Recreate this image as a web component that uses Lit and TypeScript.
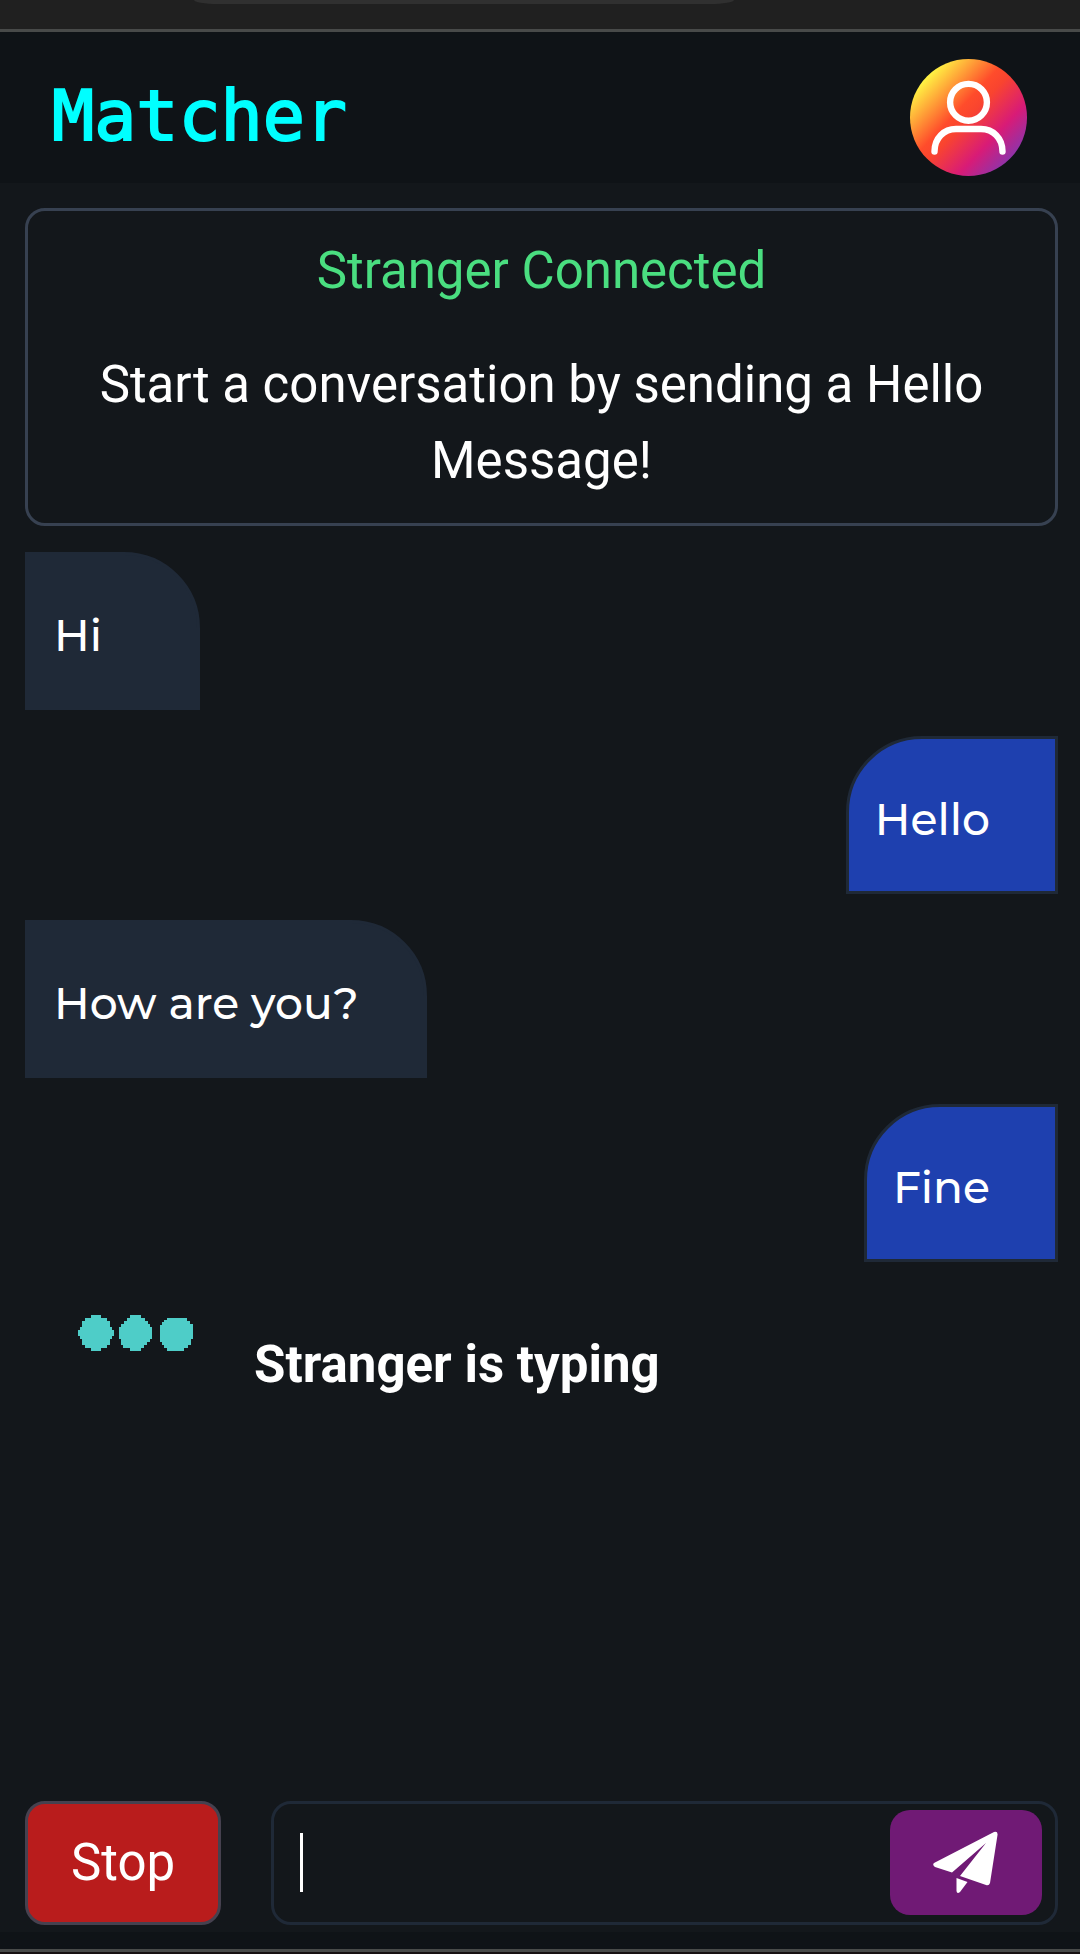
import { LitElement, html, css, svg } from "lit";
import { customElement, property, state } from "lit/decorators.js";

interface ChatMessage {
  from: "stranger" | "me";
  text: string;
}

@customElement("chat-bubble")
class ChatBubble extends LitElement {
  @property() from: ChatMessage["from"] = "stranger";
  @property() text = "";

  static styles = css`
    :host {
      display: flex;
    }
    .bubble {
      box-sizing: border-box;
      min-width: 175px;
      margin: 0;
      padding: 48px 65px 40px 26px;
      border: 3px solid #1f2937;
      background: #1f2937;
      color: #fff;
      font: 500 44px/64px Montserrat, Inter, sans-serif;
      border-radius: 0 76px 0 0;
    }
    .me {
      min-width: 0;
      margin-left: auto;
      background: #1e40af;
      border-radius: 76px 0 0 0;
    }
  `;

  render() {
    return html`<p class="bubble ${this.from}">${this.text}</p>`;
  }
}

@customElement("app-root")
class AppRoot extends LitElement {
  @state() private messages: ChatMessage[] = [
    { from: "stranger", text: "Hi" },
    { from: "me", text: "Hello" },
    { from: "stranger", text: "How are you?" },
    { from: "me", text: "Fine" },
  ];

  static styles = css`
    :host {
      display: flex;
      flex-direction: column;
      min-height: 100vh;
      background: #13171b;
      color: #fff;
      font: 400 51px/76px Roboto, sans-serif;
    }
    .browser {
      height: 29px;
      background: #202020;
      border-bottom: 3px solid #484a49;
    }
    .address {
      height: 4px;
      margin: 0 32% 0 18%;
      background: #303030;
      border-radius: 0 0 24px 24px / 0 0 4px 4px;
    }
    .header {
      display: flex;
      align-items: center;
      justify-content: space-between;
      padding: 27px 53px 7px 52px;
      background: #0f1317;
    }
    .brand {
      margin: 0 0 4px;
      color: #0ff;
      font: 400 70px/96px "Droid Sans Mono", "DejaVu Sans Mono", monospace;
      -webkit-text-stroke: 2px #0ff;
    }
    .avatar {
      display: flex;
      padding: 0;
      border: 0;
      border-radius: 50%;
      background: none;
    }
    .avatar svg {
      width: 117px;
      height: 117px;
    }
    .chat {
      flex: 1;
      display: flex;
      flex-direction: column;
      gap: 26px;
      padding: 25px 22px 25px 25px;
    }
    .notice {
      display: flex;
      flex-direction: column;
      gap: 38px;
      padding: 22px 60px 24px;
      border: 3px solid #374151;
      border-radius: 20px;
      text-align: center;
    }
    .notice p {
      margin: 0;
    }
    .notice .status {
      color: #4ade80;
    }
    .typing {
      display: flex;
      align-items: flex-start;
      gap: 60px;
      padding: 27px 53px;
      font-weight: 700;
    }
    .typing svg {
      width: 116px;
      height: 36px;
    }
    .typing p {
      margin: 12px 0 0;
    }
    .composer {
      display: flex;
      gap: 50px;
      padding: 0 22px 7px 25px;
    }
    .stop {
      padding: 0 43px;
      border: 3px solid #46414f;
      border-radius: 20px;
      background: #b91c1c;
      color: #fff;
      font: inherit;
    }
    .field {
      flex: 1;
      display: flex;
      align-items: center;
      min-width: 0;
      padding: 6px 13px 7px 26px;
      border: 3px solid #1f2937;
      border-radius: 20px;
    }
    .caret {
      width: 3px;
      height: 59px;
      background: #fff;
    }
    .input {
      flex: 1;
      min-width: 0;
      padding: 0 20px;
      border: 0;
      outline: 0;
      background: none;
      color: #fff;
      font: inherit;
    }
    .send {
      display: flex;
      align-items: center;
      justify-content: center;
      width: 152px;
      height: 105px;
      padding: 0;
      border: 0;
      border-radius: 20px;
      background: #701a75;
    }
    .send svg {
      width: 66px;
      height: 64px;
    }
    .bottom {
      height: 20px;
      background: #0f1317;
      border-bottom: 2px solid #161012;
      box-shadow: inset 0 -3px #484a49;
    }
  `;

  private avatarIcon() {
    return svg`<svg viewBox="0 0 117 117" aria-hidden="true">
      <defs>
        <linearGradient id="g" x1="0.12" y1="0.14" x2="0.88" y2="0.86">
          <stop offset="0" stop-color="#ffff45" />
          <stop offset="0.4" stop-color="#ff4c2b" />
          <stop offset="0.5" stop-color="#f9442f" />
          <stop offset="0.76" stop-color="#d81b77" />
          <stop offset="1" stop-color="#8a35ad" />
        </linearGradient>
      </defs>
      <circle cx="58.5" cy="58.5" r="58.5" fill="url(#g)" />
      <g fill="none" stroke="#fff" stroke-width="6.4" stroke-linecap="round">
        <circle cx="58.5" cy="43.3" r="18.4" />
        <path d="M24.5 92.5C24.5 79 34 70 46 70H71C83 70 92.5 79 92.5 92.5" />
      </g>
    </svg>`;
  }

  render() {
    return html`
      <div class="browser"><div class="address"></div></div>
      <header class="header">
        <h1 class="brand">Matcher</h1>
        <button class="avatar" aria-label="Profile">${this.avatarIcon()}</button>
      </header>
      <main class="chat">
        <section class="notice">
          <p class="status">Stranger Connected</p>
          <p>Start a conversation by sending a Hello Message!</p>
        </section>
        ${this.messages.map(
          (m) => html`<chat-bubble .from=${m.from} .text=${m.text}></chat-bubble>`
        )}
        <div class="typing">
          <svg viewBox="0 0 116 36" fill="#4ecdc8" aria-hidden="true">
            <path d="M13 0H23V3H29V6H32V12H34V15H36V21H34V24H32V30H29V33H23V36H13V33H7V30H4V24H2V21H0V15H2V12H4V6H7V3H13Z" />
            <path d="M52 0H63V3H67V6H70V9H72V12H74V24H72V27H69V30H66V33H63V36H52V33H45V30H43V24H41V12H43V9H46V6H49V3H52Z" />
            <path d="M89 3H109V6H112V9H115V24H113V30H110V33H106V36H89V33H86V30H84V27H82V10H84V7H86V5H89Z" />
          </svg>
          <p>Stranger is typing</p>
        </div>
      </main>
      <form class="composer" @submit=${(e: Event) => e.preventDefault()}>
        <button class="stop" type="button">Stop</button>
        <div class="field">
          <span class="caret"></span>
          <input class="input" type="text" aria-label="Message" />
          <button class="send" type="submit" aria-label="Send">
            <svg viewBox="0 0 66 64" fill="#fff" aria-hidden="true">
              <path d="M1 32L61 1Q65 0 64.500 4L57 52Q56 55 53 54L27 45L53 12L19 41.500L2 36Q-1 34 1 32Z" />
              <path d="M23.500 47L34.500 51L27 61Q24 63.500 23.500 60Z" />
            </svg>
          </button>
        </div>
      </form>
      <div class="bottom"></div>
    `;
  }
}
